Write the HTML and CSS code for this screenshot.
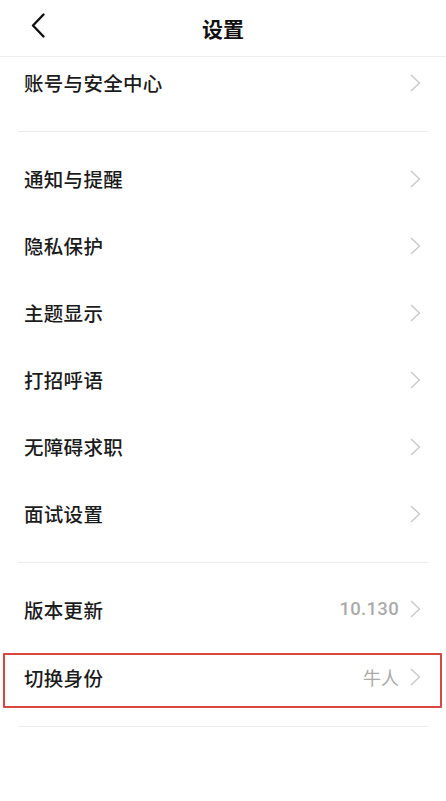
FILE: index.html
```html
<!DOCTYPE html>
<html lang="zh-CN">
<head>
  <meta charset="UTF-8" />
  <meta name="viewport" content="width=device-width, initial-scale=1.0" />
  <title>设置</title>
  <link rel="stylesheet" href="styles.css">
</head>
<body>
  <div class="header">
    <span class="back">
      <svg width="14" height="25" viewBox="0 0 14 25"><path d="M12.5 1.5 L2 12.5 L12.5 23.5" fill="none" stroke="#111" stroke-width="2.4" stroke-linecap="round" stroke-linejoin="round"/></svg>
    </span>
    <h1>设置</h1>
  </div>

  <div class="group first">
    <div class="row">
      <span class="label">账号与安全中心</span>
      <span class="arrow"><svg width="11" height="18" viewBox="0 0 11 18"><path d="M1 1 L9.5 9 L1 17" fill="none" stroke="#c9c9c9" stroke-width="1.4"/></svg></span>
    </div>
  </div>

  <div class="group">
    <div class="row">
      <span class="label">通知与提醒</span>
      <span class="arrow"><svg width="11" height="18" viewBox="0 0 11 18"><path d="M1 1 L9.5 9 L1 17" fill="none" stroke="#c9c9c9" stroke-width="1.4"/></svg></span>
    </div>
    <div class="row">
      <span class="label">隐私保护</span>
      <span class="arrow"><svg width="11" height="18" viewBox="0 0 11 18"><path d="M1 1 L9.5 9 L1 17" fill="none" stroke="#c9c9c9" stroke-width="1.4"/></svg></span>
    </div>
    <div class="row">
      <span class="label">主题显示</span>
      <span class="arrow"><svg width="11" height="18" viewBox="0 0 11 18"><path d="M1 1 L9.5 9 L1 17" fill="none" stroke="#c9c9c9" stroke-width="1.4"/></svg></span>
    </div>
    <div class="row">
      <span class="label">打招呼语</span>
      <span class="arrow"><svg width="11" height="18" viewBox="0 0 11 18"><path d="M1 1 L9.5 9 L1 17" fill="none" stroke="#c9c9c9" stroke-width="1.4"/></svg></span>
    </div>
    <div class="row">
      <span class="label">无障碍求职</span>
      <span class="arrow"><svg width="11" height="18" viewBox="0 0 11 18"><path d="M1 1 L9.5 9 L1 17" fill="none" stroke="#c9c9c9" stroke-width="1.4"/></svg></span>
    </div>
    <div class="row">
      <span class="label">面试设置</span>
      <span class="arrow"><svg width="11" height="18" viewBox="0 0 11 18"><path d="M1 1 L9.5 9 L1 17" fill="none" stroke="#c9c9c9" stroke-width="1.4"/></svg></span>
    </div>
  </div>

  <div class="group last">
    <div class="row tall">
      <span class="label">版本更新</span>
      <span class="value num">10.130</span>
      <span class="arrow"><svg width="11" height="18" viewBox="0 0 11 18"><path d="M1 1 L9.5 9 L1 17" fill="none" stroke="#c9c9c9" stroke-width="1.4"/></svg></span>
    </div>
    <div class="row tall marked">
      <span class="label">切换身份</span>
      <span class="value">牛人</span>
      <span class="arrow"><svg width="11" height="18" viewBox="0 0 11 18"><path d="M1 1 L9.5 9 L1 17" fill="none" stroke="#c9c9c9" stroke-width="1.4"/></svg></span>
    </div>
  </div>
</body>
</html>
```

FILE: styles.css
```css
body {
  margin: 0;
  background: #fff;
  color: #1c1c1c;
  font-family: "Noto Sans CJK SC", "Noto Sans", sans-serif;
}
.header {
  height: 56px;
  border-bottom: 1px solid #ececec;
  display: flex;
  align-items: center;
  justify-content: center;
  position: relative;
}
.header h1 {
  margin: 0;
  font-size: 21px;
  font-weight: 700;
  color: #111;
  line-height: 1;
}
.back {
  position: absolute;
  left: 31px;
  top: 13px;
  display: flex;
}
.group {
  margin: 0 18px;
  padding: 15px 0 13px;
  border-bottom: 1px solid #ececec;
}
.group.first {
  padding: 0 0 19px;
}
.group.first .row {
  height: 55px;
}
.group.last {
  padding: 14px 0 13px;
}
.row {
  height: 67px;
  display: flex;
  align-items: center;
  padding: 0 6px;
  position: relative;
}
.row.tall {
  height: 68px;
}
.label, .value {
  padding-bottom: 4px;
}
.label {
  flex: 1;
  font-size: 19.5px;
  font-weight: 500;
  letter-spacing: 0.3px;
}
.value {
  font-size: 18px;
  color: #ababab;
  margin-right: 11px;
}
.value.num {
  font-family: "Roboto", "Noto Sans", sans-serif;
  font-size: 18.5px;
  font-weight: 500;
  letter-spacing: 0.3px;
}
.arrow {
  display: flex;
  margin-right: 1px;
  padding-bottom: 4px;
}
.marked::after {
  content: "";
  position: absolute;
  left: -15px;
  right: -14px;
  top: 8px;
  bottom: 5px;
  border: 2px solid #d8473f;
  border-radius: 1px;
}
```
